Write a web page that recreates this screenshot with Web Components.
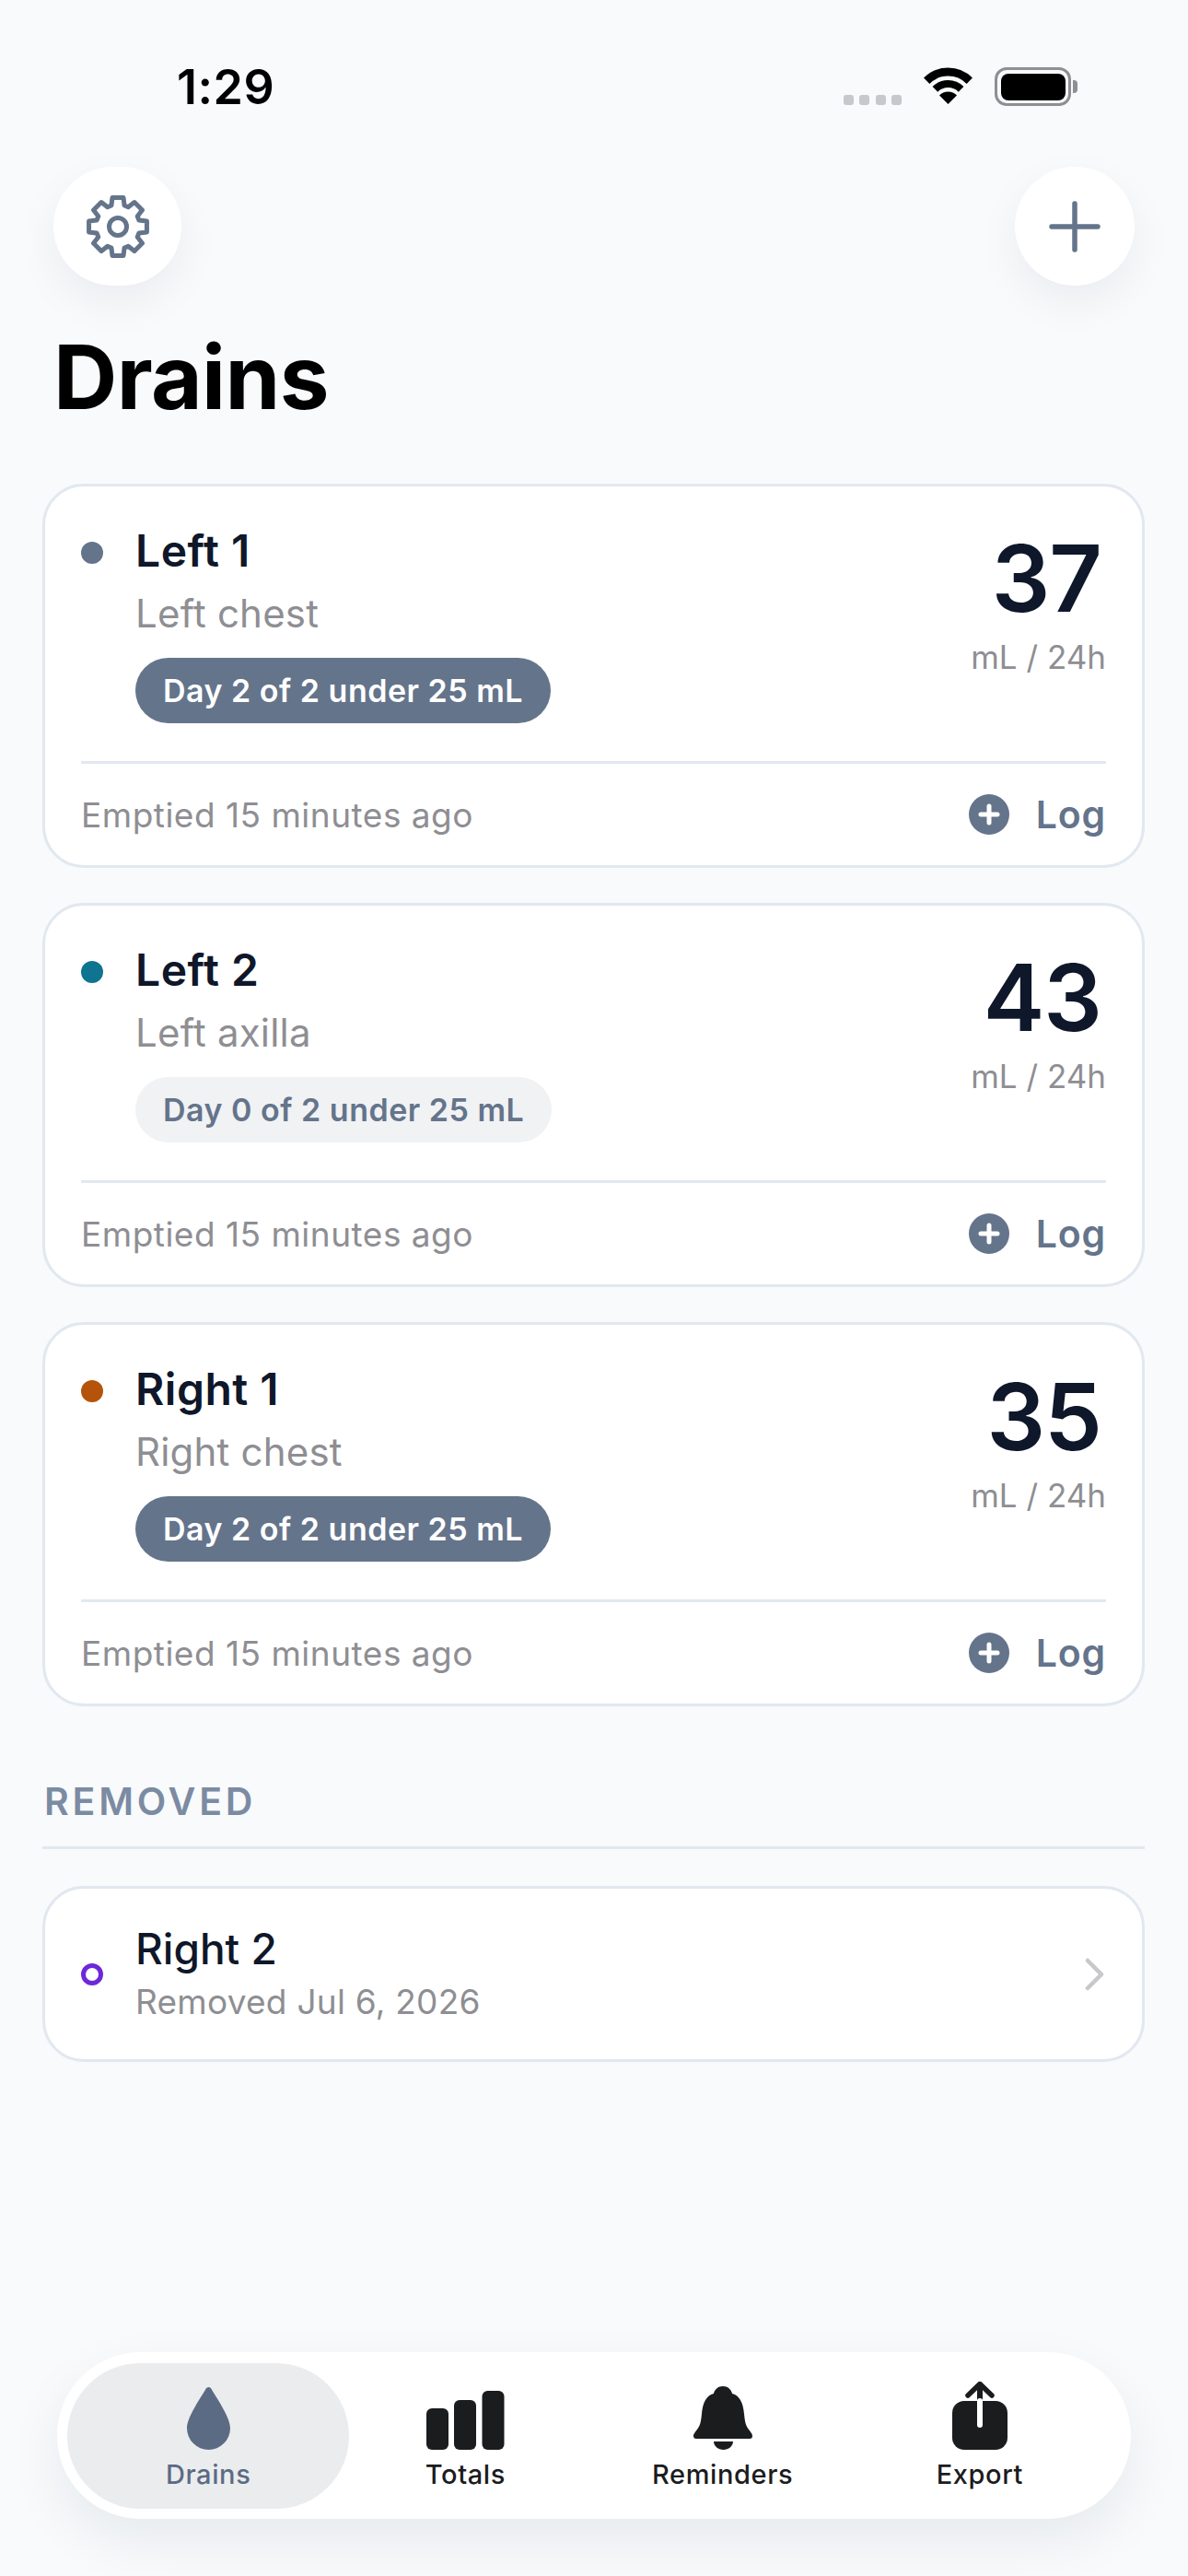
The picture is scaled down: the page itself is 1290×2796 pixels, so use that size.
<!DOCTYPE html>
<html>
<head>
<meta charset="utf-8">
<style>
  html, body { margin: 0; background: #f8fafc; }
  body { font-family: Inter, "Noto Sans", sans-serif; }
</style>
</head>
<body>
<drains-page>
  <status-bar slot="status" time="1:29"></status-bar>
  <top-actions slot="top"></top-actions>
  <page-title slot="top">Drains</page-title>
  <drain-card name="Left 1" place="Left chest" color="#64748b" total="37" badge="Day 2 of 2 under 25 mL" done></drain-card>
  <drain-card name="Left 2" place="Left axilla" color="#0e7490" total="43" badge="Day 0 of 2 under 25 mL"></drain-card>
  <drain-card name="Right 1" place="Right chest" color="#b45309" total="35" badge="Day 2 of 2 under 25 mL" done></drain-card>
  <section-label>REMOVED</section-label>
  <removed-card name="Right 2" note="Removed Jul 6, 2026" color="#6d28d9"></removed-card>
  <tab-bar slot="tabs"></tab-bar>
</drains-page>

<script>
// Page shell
class DrainsPage extends HTMLElement {
  constructor() {
    super();
    this.attachShadow({ mode: 'open' });
    this.shadowRoot.innerHTML = `
    <style>
      :host { display: flex; flex-direction: column; box-sizing: border-box; height: 2796px; overflow: hidden; background: #f8fafc; }
      .list { display: flex; flex-direction: column; padding: 0 47px 0 46px; }
      .tabs { margin-top: auto; padding: 0 62px 62px; }
    </style>
    <slot name="status"></slot>
    <slot name="top"></slot>
    <div class="list"><slot></slot></div>
    <div class="tabs"><slot name="tabs"></slot></div>
    `;
  }
}

class StatusBar extends HTMLElement {
  constructor() {
    super();
    this.attachShadow({ mode: 'open' });
    this.shadowRoot.innerHTML = `
    <style>
      :host { display: flex; align-items: flex-start; height: 181px; box-sizing: border-box; padding: 73px 119px 0 192px; }
      .time { font-size: 52px; line-height: 44px; font-weight: 600; color: #000; letter-spacing: 0.5px; }
      .right { margin-left: auto; display: flex; align-items: flex-start; }
      .dots { display: flex; gap: 6.5px; margin: 30px 23px 0 0; }
      .dots i { width: 11px; height: 11px; border-radius: 3px; background: #c7c7cc; }
      svg { display: block; }
      .wifi { margin-right: 23px; }
      .batt { box-sizing: border-box; width: 83px; height: 42px; border: 3.5px solid #8e8e93; border-radius: 13px; padding: 3.5px; }
      .batt i { display: block; height: 100%; background: #000; border-radius: 8px; }
      .nub { width: 5px; height: 14px; margin: 14px 1px 0 2px; background: #8e8e93; border-radius: 0 4px 4px 0; }
    </style>
    <div class="time">${this.getAttribute('time')}</div>
    <div class="right">
      <div class="dots"><i></i><i></i><i></i><i></i></div>
      <svg class="wifi" width="55" height="40" viewBox="0 0 55 40">
        <path d="M4.2 14.7A33 33 0 0 1 50.8 14.7" fill="none" stroke="#000" stroke-width="9"/>
        <path d="M13.4 23.9A20 20 0 0 1 41.6 23.9" fill="none" stroke="#000" stroke-width="8"/>
        <path d="M27.5 40L18 30.5A13.4 13.4 0 0 1 37 30.5Z" fill="#000"/>
      </svg>
      <div class="batt"><i></i></div>
      <div class="nub"></div>
    </div>
    `;
  }
}

// 8 tooth gear outline, worked out rather than typed in
function gearPath(cx, cy, rOut, rIn, teeth) {
  const pts = [];
  const step = (Math.PI * 2) / teeth;
  for (let i = 0; i < teeth; i++) {
    const a = i * step - Math.PI / 2;
    const wide = step * 0.38;
    const top = step * 0.24;
    pts.push([a - wide, rIn], [a - top, rOut], [a + top, rOut], [a + wide, rIn]);
  }
  return 'M' + pts.map(([a, r]) => `${(cx + r * Math.cos(a)).toFixed(2)} ${(cy + r * Math.sin(a)).toFixed(2)}`).join('L') + 'Z';
}

class TopActions extends HTMLElement {
  constructor() {
    super();
    this.attachShadow({ mode: 'open' });
    this.shadowRoot.innerHTML = `
    <style>
      :host { display: flex; justify-content: space-between; padding: 0 58px; }
      button { all: unset; display: flex; align-items: center; justify-content: center; height: 129px; background: #fff; border-radius: 65px; box-shadow: 0 18px 48px rgba(15, 23, 42, 0.06); }
      .gear { width: 139px; }
      .plus { width: 130px; }
      svg { display: block; }
    </style>
    <button class="gear">
      <svg width="70" height="70" viewBox="0 0 70 70" fill="none" stroke="#64748b" stroke-width="5" stroke-linejoin="round">
        <path d="${gearPath(35, 35, 32, 24, 8)}"/>
        <circle cx="35" cy="35" r="9.5"/>
      </svg>
    </button>
    <button class="plus">
      <svg width="56" height="56" viewBox="0 0 56 56" fill="none" stroke="#64748b" stroke-width="5.5" stroke-linecap="round">
        <path d="M28 3V53M3 28H53"/>
      </svg>
    </button>
    `;
  }
}

class PageTitle extends HTMLElement {
  constructor() {
    super();
    this.attachShadow({ mode: 'open' });
    this.shadowRoot.innerHTML = `
    <style>
      :host { display: block; padding: 41px 0 0 58px; height: 215px; box-sizing: border-box; font-size: 96px; line-height: 116px; font-weight: 700; color: #000; letter-spacing: -0.6px; }
    </style>
    <slot></slot>
    `;
  }
}

class DrainCard extends HTMLElement {
  constructor() {
    super();
    this.attachShadow({ mode: 'open' });
    const done = this.hasAttribute('done');
    this.shadowRoot.innerHTML = `
    <style>
      :host { display: block; box-sizing: border-box; height: 417px; margin-bottom: 38px; padding: 0 39px; background: #fff; border: 3px solid #e2e8f0; border-radius: 45px; }
      .top { display: flex; height: 301px; box-sizing: border-box; padding-top: 41px; border-bottom: 3px solid #e2e8f0; }
      .dot { flex: none; width: 24px; height: 24px; margin: 19px 35px 0 0; border-radius: 50%; background: ${this.getAttribute('color')}; }
      .info { flex: 1; }
      .name { font-size: 48px; line-height: 58px; font-weight: 600; color: #0f172a; letter-spacing: 0.5px; }
      .place { margin-top: 13px; font-size: 42px; line-height: 52px; color: #8e8e93; letter-spacing: 0.2px; }
      .badge { display: inline-block; margin-top: 22px; padding: 0 30px; height: 71px; line-height: 71px; border-radius: 36px; font-size: 34px; font-weight: 600; letter-spacing: 0.5px; color: ${done ? '#fff' : '#64748b'}; background: ${done ? '#64748b' : '#f1f2f4'}; }
      .nums { text-align: right; }
      .total { font-size: 100px; line-height: 100px; margin: 9px 5px 0 0; font-weight: 600; letter-spacing: -1px; color: #0f172a; }
      .unit { margin-top: 14px; font-size: 35px; line-height: 42px; color: #8e8e93; }
      .foot { display: flex; align-items: center; height: 110px; }
      .ago { flex: 1; font-size: 37px; letter-spacing: 0.5px; color: #8e8e93; }
      .log { display: flex; align-items: center; gap: 29px; font-size: 41px; font-weight: 600; letter-spacing: 0.8px; color: #64748b; }
      svg { display: block; }
    </style>
    <div class="top">
      <div class="dot"></div>
      <div class="info">
        <div class="name">${this.getAttribute('name')}</div>
        <div class="place">${this.getAttribute('place')}</div>
        <div class="badge">${this.getAttribute('badge')}</div>
      </div>
      <div class="nums">
        <div class="total">${this.getAttribute('total')}</div>
        <div class="unit">mL / 24h</div>
      </div>
    </div>
    <div class="foot">
      <div class="ago">Emptied 15 minutes ago</div>
      <div class="log">
        <svg width="44" height="44" viewBox="0 0 44 44"><circle cx="22" cy="22" r="22" fill="#64748b"/><path d="M22 13V31M13 22H31" stroke="#fff" stroke-width="5" stroke-linecap="round"/></svg>
        <span>Log</span>
      </div>
    </div>
    `;
  }
}

class SectionLabel extends HTMLElement {
  constructor() {
    super();
    this.attachShadow({ mode: 'open' });
    this.shadowRoot.innerHTML = `
    <style>
      :host { display: block; box-sizing: border-box; height: 106px; margin-top: 11px; padding: 29px 0 0 0; margin-bottom: 40px; border-bottom: 3px solid #e2e8f0; }
      span { display: block; margin-left: 2px; font-size: 41px; line-height: 50px; font-weight: 600; letter-spacing: 3.8px; color: #7b8ba2; }
    </style>
    <span><slot></slot></span>
    `;
  }
}

class RemovedCard extends HTMLElement {
  constructor() {
    super();
    this.attachShadow({ mode: 'open' });
    this.shadowRoot.innerHTML = `
    <style>
      :host { display: flex; align-items: center; box-sizing: border-box; height: 191px; padding: 0 39px; background: #fff; border: 3px solid #e2e8f0; border-radius: 45px; }
      .ring { flex: none; box-sizing: border-box; width: 24px; height: 24px; margin-right: 35px; border-radius: 50%; border: 5px solid #6d28d9; border-color: ${this.getAttribute('color')}; }
      .info { flex: 1; padding-bottom: 3px; }
      .name { font-size: 46px; line-height: 56px; font-weight: 500; color: #0f172a; }
      .note { margin-top: 7px; font-size: 37px; line-height: 45px; letter-spacing: 0.25px; color: #8e8e93; }
      svg { display: block; }
    </style>
    <div class="ring"></div>
    <div class="info">
      <div class="name">${this.getAttribute('name')}</div>
      <div class="note">${this.getAttribute('note')}</div>
    </div>
    <svg width="24" height="36" viewBox="0 0 24 36" fill="none" stroke="#c7c7cc" stroke-width="4.5" stroke-linecap="round" stroke-linejoin="round"><path d="M4 3L19 18L4 33"/></svg>
    `;
  }
}

class TabItem extends HTMLElement {
  constructor() {
    super();
    this.attachShadow({ mode: 'open' });
    const active = this.hasAttribute('active');
    this.shadowRoot.innerHTML = `
    <style>
      :host { display: flex; flex-direction: column; align-items: center; margin: 0 -13.5px; height: 158px; box-sizing: border-box; padding-top: 18px; border-radius: 79px; background: ${active ? '#ebecee' : 'transparent'}; color: ${active ? '#5b6b84' : '#1b1c1e'}; font-size: 29px; line-height: 36px; font-weight: 450; letter-spacing: 0.6px; }
      .icon { display: flex; align-items: flex-end; justify-content: center; height: 76px; margin-bottom: 9px; }
    </style>
    <div class="icon"><slot name="icon"></slot></div>
    <slot></slot>
    `;
  }
}

class TabBar extends HTMLElement {
  constructor() {
    super();
    this.attachShadow({ mode: 'open' });
    this.shadowRoot.innerHTML = `
    <style>
      :host { display: grid; grid-template-columns: repeat(4, 1fr); align-items: center; box-sizing: border-box; width: 1166px; height: 181px; padding: 0 24.5px; background: #fff; border-radius: 91px; box-shadow: 0 24px 60px rgba(15, 23, 42, 0.07); }
    </style>
    <tab-item active>
      <svg slot="icon" width="47" height="68" viewBox="0 0 47 68"><path fill="currentColor" d="M23.5 0C25 0 26 1 26.7 2.2C33 13 47 33 47 44.5A23.5 23.5 0 0 1 0 44.5C0 33 14 13 20.3 2.2C21 1 22 0 23.5 0Z"/></svg>
      Drains
    </tab-item>
    <tab-item>
      <svg slot="icon" width="85" height="64" viewBox="0 0 85 64" fill="currentColor"><rect x="0" y="19" width="24" height="45" rx="6"/><rect x="30" y="10" width="24" height="54" rx="6"/><rect x="60.500" y="0" width="24" height="64" rx="6"/></svg>
      Totals
    </tab-item>
    <tab-item>
      <svg slot="icon" width="64" height="69" viewBox="0 0 64 69" fill="currentColor"><path d="M32 0C37 0 41 3.500 42 8C50 10 54 18 55 30C56 40 57 43 60 47C63 51 64 52 64 54C64 56 63 57 61 57H3C1 57 0 56 0 54C0 52 1 51 4 47C7 43 8 40 9 30C10 18 14 10 22 8C23 3.500 27 0 32 0Z"/><path d="M22 60H43C43 65 38 69 32.500 69C27 69 22 65 22 60Z"/></svg>
      Reminders
    </tab-item>
    <tab-item>
      <svg slot="icon" width="60" height="74" viewBox="0 0 60 74"><rect y="21" width="60" height="53" rx="13" fill="currentColor"/><path d="M30 3V21" stroke="currentColor" stroke-width="6" fill="none"/><path d="M30 21V47" stroke="#fff" stroke-width="6" stroke-linecap="round" fill="none"/><path d="M17 15L30 2.500L43 15" stroke="currentColor" stroke-width="5.500" stroke-linecap="round" stroke-linejoin="round" fill="none"/></svg>
      Export
    </tab-item>
    `;
  }
}

customElements.define('drains-page', DrainsPage);
customElements.define('status-bar', StatusBar);
customElements.define('top-actions', TopActions);
customElements.define('page-title', PageTitle);
customElements.define('drain-card', DrainCard);
customElements.define('section-label', SectionLabel);
customElements.define('removed-card', RemovedCard);
customElements.define('tab-item', TabItem);
customElements.define('tab-bar', TabBar);
</script>
</body>
</html>
